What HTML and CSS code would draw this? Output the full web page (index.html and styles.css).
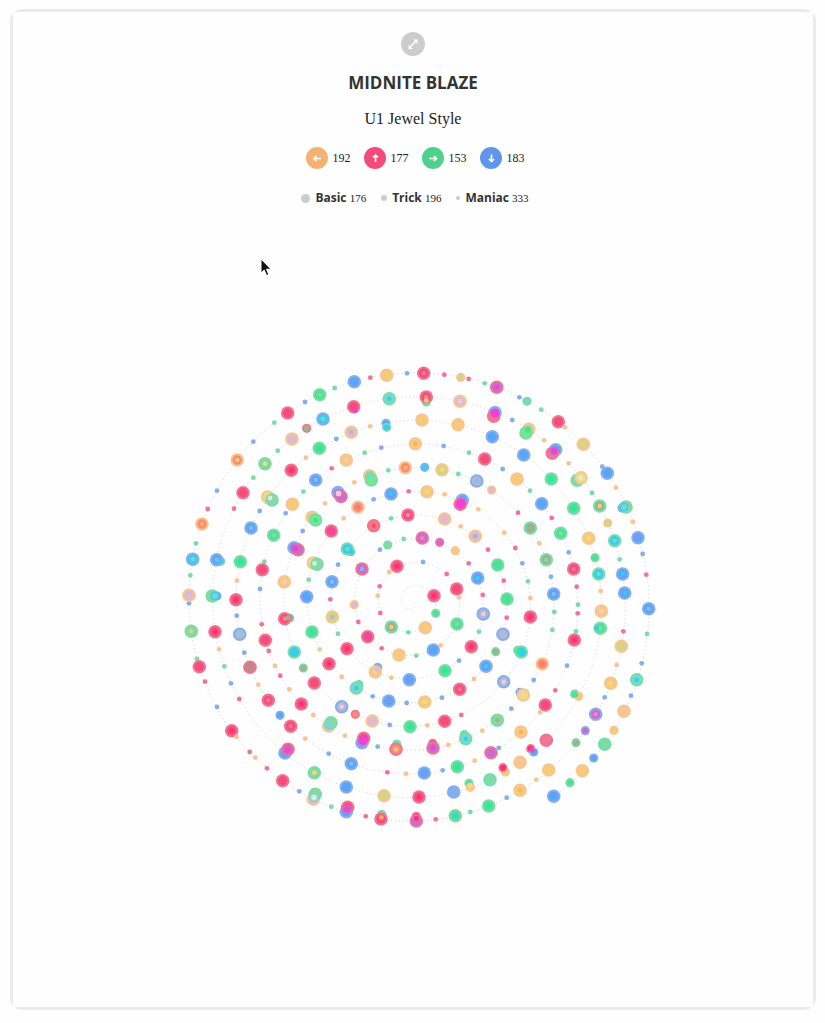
FILE: index.html
```html
<!DOCTYPE html>
<html lang="en">
<head>
<meta charset="utf-8">
<meta name="viewport" content="width=device-width, initial-scale=1">
<title>Midnite Blaze</title>
<link rel="stylesheet" href="styles.css">
</head>
<body>
<div class="frame">
<main class="card">
  <button class="expand" type="button" aria-label="Expand">
    <svg viewBox="0 0 24 24" width="24" height="24" aria-hidden="true"><path d="M9 15L15 9" stroke="#fff" stroke-width="1.6"/><path d="M12 7.500h4.500V12zM7.500 12.500V17H12z" fill="#fff"/></svg>
  </button>
  <h1 class="title">MIDNITE BLAZE</h1>
  <p class="subtitle">U1 Jewel Style</p>
  <ul class="row directions">
    <li class="item"><span class="badge left"><svg viewBox="0 0 22 22" aria-label="Left"><path d="M8 11.500h7M10.500 9L8 11.500l2.500 2.500"/></svg></span><span class="count">192</span></li>
    <li class="item"><span class="badge up"><svg viewBox="0 0 22 22" aria-label="Up"><path d="M11.500 15V8M9 10.500L11.500 8l2.500 2.500"/></svg></span><span class="count">177</span></li>
    <li class="item"><span class="badge right"><svg viewBox="0 0 22 22" aria-label="Right"><path d="M7.500 11.500h7M12 9l2.500 2.500L12 14"/></svg></span><span class="count">153</span></li>
    <li class="item"><span class="badge down"><svg viewBox="0 0 22 22" aria-label="Down"><path d="M11.500 7.500v7M9 12l2.500 2.500L14 12"/></svg></span><span class="count">183</span></li>
  </ul>
  <ul class="row levels">
    <li class="item"><span class="dot basic"></span><span><b>Basic</b> <span class="total">176</span></span></li>
    <li class="item"><span class="dot trick"></span><span><b>Trick</b> <span class="total">196</span></span></li>
    <li class="item"><span class="dot maniac"></span><span><b>Maniac</b> <span class="total">333</span></span></li>
  </ul>
  <svg class="chart" id="chart" viewBox="168 360 490 470" role="img" aria-label="Step sequence drawn as a spiral"></svg>
</main>
</div>
<svg class="cursor" viewBox="0 0 12 19" aria-hidden="true"><path d="M1 1v14l3.200-3 2.300 5.500 2.300-1-2.300-5.300H11z" fill="#111" stroke="#fff"/></svg>
<script src="chart.js"></script>
</body>
</html>
```

FILE: styles.css
```css
* { box-sizing: border-box; }
body {
  margin: 0;
  padding: 9px 9px 13px 10px;
  background: #fefefe;
  color: #333;
  font-family: "Open Sans", sans-serif;
}
.frame {
  padding: 3px;
  border-radius: 12px;
  background: #ebebeb;
  overflow: hidden;
}
.card {
  display: flex;
  flex-direction: column;
  align-items: center;
  padding: 20px 0 177px;
  background: #fefefe;
}
.expand {
  width: 24px;
  height: 24px;
  padding: 0;
  border: 0;
  border-radius: 50%;
  background: #ccc;
}
.expand svg { display: block; }
.title {
  margin: 15px 0 0;
  font-size: 17px;
  line-height: 24px;
  font-weight: 700;
}
.subtitle {
  margin: 12px 0 0;
  font: 16px/24px "Liberation Serif", serif;
}
.row {
  display: flex;
  margin: 0;
  padding: 0 0 0 4px;
  list-style: none;
}
.item {
  display: flex;
  align-items: center;
  gap: 5px;
}
.directions {
  gap: 13px;
  margin-top: 16px;
}
.levels {
  gap: 15px;
  margin-top: 19px;
  font-size: 12px;
  line-height: 20px;
}
.badge {
  width: 22px;
  height: 22px;
  border-radius: 50%;
}
.badge svg {
  display: block;
  fill: none;
  stroke: #fff;
  stroke-width: 1.7;
}
.left { background: #f5b174; }
.up { background: #f54a79; }
.right { background: #4fd18b; }
.down { background: #5f96ec; }
.count { font: 12px/22px "Liberation Serif", serif; }
.total { font: 11px/20px "Liberation Serif", serif; }
.count, .total, .subtitle { color: #222; }
.dot {
  border-radius: 50%;
  background: #ccc;
}
.basic { width: 9px; height: 9px; }
.trick { width: 6px; height: 6px; }
.maniac { width: 4px; height: 4px; }
.chart {
  width: 490px;
  max-width: 100%;
  margin-top: 152px;
}
.track {
  fill: none;
  stroke: #d0d0d0;
  stroke-width: 1;
  stroke-dasharray: 1 3;
}
.cursor {
  position: absolute;
  left: 260px;
  top: 258px;
  width: 12px;
  height: 19px;
}
```

FILE: chart.js
```js
// Each step: x y, size (L, M, S), then one colour per ring from the outside in.
const steps = `
319.7 394.7 Lghn;334.7 388 Sg;287.7 413 Lpq;305 402 Sb;274.3 422.7 Sg;323 419 Lbce;306.7 428.3 Mpt;292 439 Lok;253.3 441.7 Sb
319.3 448.3 LghG;336.3 439 Sb;277.7 450.7 Sg;306 457.7 So;237.3 460 Losa;265 463.7 LgjY;291.3 470.3 LpqP;315.7 480 LbBd;331.7 468.3 Sp
253.3 477.7 Sg;303.3 491.7 Sg;217 490.7 Sb;243 492.7 Lpq;267.7 497 LoY;272 500 Lgje;270 498 Sw;292.3 504.3 Loa;325 503.3 So
259.7 511 Sb;285.7 513.3 Sb;207.7 509 Sp;234 508.7 Sp;312.3 517.3 Loy;315.5 520 LgnG;338 492.5 Lb;341 496.5 Lpv;338.5 493.5 Mvf
354.3 381.7 LbB;370.3 377.7 Sp;386.7 375.3 Loa;407 373.3 Sb;423.7 373.3 Lpqp;444.3 374.7 Sp;460.7 377.3 Moy;468.7 379 Sp;484.7 383.3 Sg
496.7 387.3 Lpvm;353.7 406.7 Lpq;355 410.7 Sm;389.3 398.7 Lgec;426.3 402 Mg;426.3 397 Lpqs;426.3 400.5 Sa;460 401.3 Lokf
495 412.5 Lb;493.7 416.3 Lp;495 413 Mmm;351.3 432.3 Lokl;370 426.3 So;386 423.3 MbB;386.7 427.3 Mgc;422 420 Loa;458 424.7 Loa;492.3 436.7 LbB
346.3 460 Loaf;364.7 452.7 Sg;381.3 447.7 Sb;415.3 443.7 Loar;443.7 446 Sb;469 452.7 Sg;484.7 459 Lpq;354.3 482.3 So
369.7 475.7 Lon;371.3 480 Lgn;370 476 Se;388.3 470.3 Sg;405.3 467.7 Losr;424.7 467.3 Mbc;442 469.7 LoyY;458.3 474 Sg;476.7 481 Lbld;491.7 490 Mok
373.7 499.3 Sb;391 494 LbBc;408.7 491.3 Sp;427 491.7 LoaY;444.7 494.3 So;462.3 500.3 LbB;460.3 504.3 Lpm;461 503 Mmm;358 507.3 LosS;478.3 509.3 So;343.7 518.3 So
408 515 Lpqz;391 518.3 Sg;444.7 519 Lok;519.3 397.3 Sb;527 401.3 Mg;541.3 409.7 Sg;558.3 421.7 Lpq;565 427.3 So;583.3 444.3 Loya;512.3 420 Sb
528.7 429.3 Lo;526 433 Lgn;528 430 Mnh;544 440.3 So;555.7 449.7 LbB;552.3 453.3 Lp;554 451 Mvm;523.7 455 LbB;568.7 463.3 So;602.3 466.7 Sb;607.3 473.3 LbB
502.7 469 Sb;551.3 479 LghG;577.3 480.3 Lg;581 477.7 LoY;580.5 478 Sw;517 479 Loa;616 487.7 So;530 490.7 Sg;592 493 Sg;541.7 503.7 LbB
573.7 508.3 LghG;599.7 506 Lgta;622 508 Mbc;626 507 Lgj;624 507 Mce;518 512.7 Sp;551.7 518 Sp;607.7 523 Moy;632.7 521.7 So
202 524 Losr;196 543.3 Sg;251 528 LbBd;273.7 535.3 Lghg;192.7 559.3 Lbce;190.3 575.3 Sg;220.7 561.3 Mgc;216.7 559.7 LbBd;220 561 Sc;240.3 561.7 LghG
237 580.7 So;264.3 561.7 Sg;262.3 569.7 Lpq;260 589 Sb;189 603.3 Sb;189 595.3 Lok;217 596 Mbc;212.3 596 Lgj;215 596 Mce;236 599.7 LpqP;236.7 615.7 Sb
294 547.7 LbB;298 549.7 Lpv;295 548.3 Mvm;284.3 581.7 LoaY;284.7 582 Sf;302.7 531 Sb;331.3 531 Lpqm;313.3 563 LoY;317 564.3 Lgje;314.5 563.5 Sw
308.7 579.7 Sg;332 581.7 LbBd;306.7 596.7 LbB;338 564.7 Sb;330.3 599.3 Sp;289.7 618 Mgv;284.7 618.7 Lpqs;288 618 St;261.7 624.3 Sp
191.3 631.3 Lgjy;215 631.7 LpqP;239.7 634.3 Lble;265.3 640.3 Lpq;312 632 LghG;332.3 617 Loyl;338 633.7 Sg;219 649.3 So;244.3 652.7 Sb;268.7 651 Sp
294.3 652 Lgc;197 659 Sg;199.3 666.7 Lpq;224.3 666.3 Sg;250 667.3 LpT;275 666 So;303.3 668 Mgt;319.7 649.3 So;329 663.7 LpqP;280.3 675.7 Sp;314.3 683 Lpq
373.7 525.7 LpSq;351 551.7 Mgc;347.3 549 Lgce;351 551.7 Sc;387.7 545 Mg;380 549.7 Sb;403.7 539 Sg;422.3 538 Lpvz;439.7 542.3 Mpv;455.3 550.7 Moa
468.7 563.3 Sp;460.7 526.3 So;475.3 536.3 Lokd;488 549.7 Sp;497.7 565 Lgh;362 569 Lpvd;397 566.3 LpqP;389.3 572 So;423 562 Sb;446.7 574 Sp
456.7 589 Lpq;459 597.3 So;477.7 578 LbBc;482.7 595 Sp;379.7 586.3 Sp;377.7 595.7 So;354.3 604.7 Mok;380.3 613 Sp;358.3 622 Sp;391.3 627 Lgta
434 595.7 LpqP;435.7 613.3 Mgh;425.3 627.7 Loa;457 624 Lghj;483.3 614 Lblf;408.3 632.3 Sg;367.7 636.7 Lpqm;347 648.7 LpqP;381.7 648.3 Sp;399 655 Loa
416.3 655.7 Sg;433.3 650 LbB;440.7 645.3 So;459 660.7 Sb;471.3 646.7 LpqP;479 631.7 Sg;495.7 651.7 Mgt;445 670.7 LghG;486 666.3 LbBc
377.7 667.3 Mb;375.3 672 Loaf;377 669.5 Sk;409.3 679.7 LbBV;341.7 677 So;391.3 677.7 So;474 679 So;503 634.3 Lbl
504.3 532.7 So;530.3 528 Lgt;560.7 533.3 Lghn;588.7 538.3 LoaY;614.7 540.7 Lgce;638 537.7 LbBV;515.3 548 Sp;539.3 543.3 So;546.3 559.7 Lgtg
568.7 552.3 Sb;595 557.7 Mgh;619.7 559.3 Sg;642.7 554 Sb;522.3 563.3 Sb;573.7 569 Lpqp;551 576.7 Sb;598.7 574 Lgce;622.7 574 LbBc;646.3 574.7 Sp
528 581.3 Sg;503.7 580.7 Sp;507 599 Lgh;530.3 598 So;553.7 594 LbBd;576.7 586.7 Sp;600.7 591 So;624.7 593 LbBc;506.7 617.7 Sp;530.3 617 LpqP
554.3 612 Sg;578 604.7 Sg;577.7 613.3 Sp;601.3 611 LoaY;601.3 611 Sf;648.7 608.7 LbBd;552.3 630 Sg;576 631.3 Sg;574.3 640 LpqP;600.3 628.3 Lghn;596.5 628 Sc
623.3 631.3 Sp;647 634 Sg;517.7 650.3 Mgh;521.3 652 Lgc;518.5 651 SG;542.3 664 LosS;567 665.7 Sb;621.3 646.3 Loy;616.7 665 So;641.7 663.3 Sb
636.7 679.7 Lgec;533.7 680 Sb;610.7 683.3 LoaY;503.7 681.7 Lblf;205 681.7 Sp;231 683.3 Sb;258.3 684.7 So;217 707 Sb;239.3 699 Sp;268.3 700.3 Lpqp
289.3 689.3 So;301.3 704 LpqP;280 715.3 MbB;313.3 715 So;290.7 726.3 Lpqp;328.7 726 Lok;331 722.7 Lgj;329 725.5 Mee;231.7 730.7 LpqP;236.7 737 So
305.3 738.7 So;328.7 753.7 Sb;285 753 LbB;288 749.3 Lpq;287.5 750 Mvm;249.7 752 Sp;255.3 757.7 So;267 768.3 Sp;314.3 772.7 LgjY;282.7 780.7 Lpq
299.3 791.3 Sb;313.3 799 Lok;315.3 794.3 Lgj;314 797.5 Mew;331.3 806.7 Sg;359 684.7 Mgh;356.3 688 Lgec;372.7 696.3 Sb;388.7 701 LbBV;406.7 703 Sb
424.7 702 LoaY;442 697.7 Sb;459.7 689.3 Lpqp;341.7 706.7 Lblf;355.3 714.3 Mps;372.3 721 Lok;389.7 725 Sb;410 726.7 LghG;427.3 725.3 So;444.7 721.3 Lpq
461.3 715 Sp;497.3 720.3 Lgjt;345 735.7 So;362 742.7 LbV;363.7 738.3 Lpq;363 740.5 Mmm;377.7 746.7 Sb;396.7 744 Mg;396 749.3 Lpsa;432.7 743.3 MpP;433 748 Lpvm
448.3 745 So;464.3 734.7 Mgh;465.7 738.7 Lgec;482.3 730.7 So;351.3 763.7 LbBd;387.3 772.3 Sp;406 773.7 So;424.3 773 LbBV;442.7 770.3 Sb;457.3 766.7 LghG
474.7 760.7 So;498.7 748 Sb;491 752.7 Lpv;346.3 787 LbB;384 795.7 Loy;419 797 LpqP;453.7 792 Lb;469 783.3 Mgh;470.3 787.3 Moa;469.7 785.5 SY;490 779.7 Lg
346.3 811.7 LbB;347.7 807.3 Lpq;347 809.5 Mvm;365.7 816.3 Sp;381.7 814.3 Mg;381 819 Lpq;381.3 817.5 Srr;416.3 816.3 MpP;416.3 821 Lpv;416.3 818.5 SP;435.7 819.3 Sp
455.3 815.7 Lghc;470.3 812 Sg;488.7 806 LghG;520 692.3 Mb;523.3 695 LoY;521.5 694 Sf;511.3 708.7 Sb;545.3 705 Lpq;540 712.3 So;555.3 690.3 Sp;574.7 694 Mgh;578.7 696.3 Moa
576 695 Sh;604.7 697.3 Sb;631 695.7 Sb;595.7 714.3 Lbvz;624 711.3 Lo;585.3 730.7 Mbv;614 730.3 Moa;521 732 Loar;546.3 740.3 Lp;576 742.7 Mgt;604.7 744.3 Lg
530.7 748.7 MpP;533.7 752 MbB;532.3 750.3 Sm;593.7 758 MbB;520 762.3 Lo;505.3 772 Moa;503 767.7 MpP;548.7 770 Loa;582.3 770.7 Loa;536.3 779.7 So;520 790.3 Loar
570 782.7 Mgh;506.7 797.7 Sb;553.7 796.3 LbB
`;

const colours = {
  o: '#f6c592', p: '#ef7595', g: '#7adca8', b: '#86aeee',
  a: '#f8ca78', q: '#f54c7c', h: '#4ce197', B: '#58a6f8',
  P: '#ff2e70', G: '#20ef98', r: '#f6b06b', s: '#fa8c74', S: '#fa7777',
  n: '#77e68c', j: '#90d59c', y: '#d2d585', Y: '#eee078', t: '#a0b18c', T: '#c38787',
  k: '#dfb9cf', l: '#b0b8d8', d: '#91b7f0', f: '#f5cad4', w: '#dceada',
  c: '#38cdee', e: '#73dad1', v: '#cb6bd0', V: '#8994f0', m: '#f23fd5', z: '#eb86bd'
};
const radii = { L: [6.8, 4.7, 2.2], M: [4.6, 2.9, 1.5], S: [2.4, 1.5] };
const chart = document.getElementById('chart');

function add(name, attributes) {
  const node = document.createElementNS('http://www.w3.org/2000/svg', name);
  for (const key in attributes) node.setAttribute(key, attributes[key]);
  chart.appendChild(node);
}

// The track is a spiral that widens by a fixed pitch each turn.
const points = [];
for (let turn = 0.06; turn <= 10.15; turn += 0.005) {
  const radius = 23.7 * turn - 1;
  const angle = turn * 2 * Math.PI;
  points.push((413 + radius * Math.cos(angle)).toFixed(1) + ',' + (597 + radius * Math.sin(angle)).toFixed(1));
}
add('polyline', { class: 'track', points: points.map(shift).join(' ') });

function shift(point) {
  const [x, y] = point.split(',').map(Number);
  return x + ',' + (y + 6);
}

for (const step of steps.trim().split(/[;\n]+/)) {
  const [x, y, kind] = step.split(' ');
  [...kind.slice(1)].forEach((colour, ring) => {
    add('circle', { cx: x, cy: y, r: radii[kind[0]][ring], fill: colours[colour] });
  });
}
```
